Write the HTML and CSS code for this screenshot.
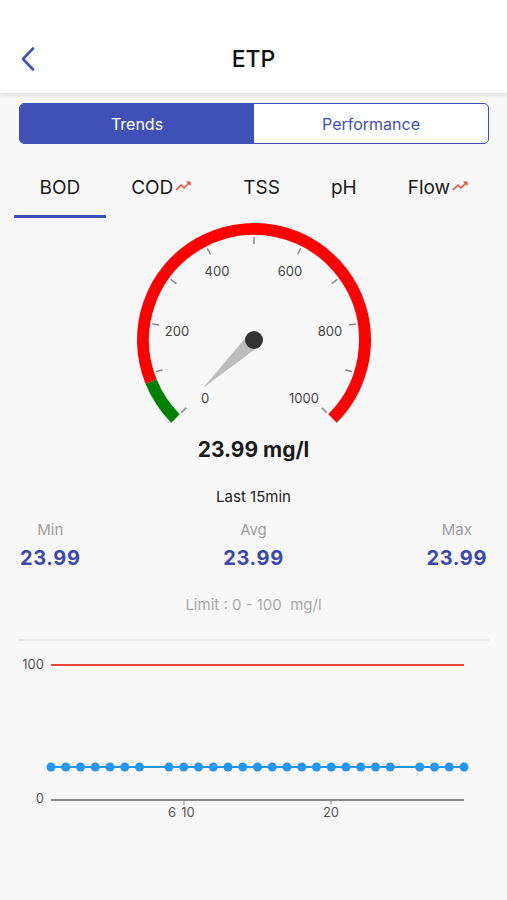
FILE: index.html
```html
<!DOCTYPE html>
<html lang="en">
<head>
    <meta charset="UTF-8">
    <meta name="viewport" content="width=device-width, initial-scale=1.0">
    <title>ETP</title>
    <link rel="stylesheet" href="styles.css">
</head>
<body>
    <div class="header">
        <div class="back-btn">
            <svg width="14" height="24" viewBox="0 0 14 24">
                <path d="M12 1.5 L2 12 L12 22.5" fill="none" stroke="#3f51b5" stroke-width="2.6" stroke-linecap="round" stroke-linejoin="round"/>
            </svg>
        </div>
        <h1 class="title">ETP</h1>
        <div></div>
    </div>

    <div class="segment">
        <div class="segment-item active">Trends</div>
        <div class="segment-item">Performance</div>
    </div>

    <div class="tabs">
        <div class="tab active">BOD</div>
        <div class="tab">COD<svg class="trend-icon" viewBox="0 0 24 24"><path d="M16 6l2.29 2.29-4.88 4.88-4-4L2 16.590 3.41 18l6-6 4 4 6.3-6.29L22 12V6z"/></svg></div>
        <div class="tab">TSS</div>
        <div class="tab">pH</div>
        <div class="tab">Flow<svg class="trend-icon" viewBox="0 0 24 24"><path d="M16 6l2.29 2.29-4.88 4.88-4-4L2 16.59 3.41 18l6-6 4 4 6.3-6.29L22 12V6z"/></svg></div>
    </div>

    <div class="gauge">
        <svg width="260" height="210" viewBox="0 0 260 210">
            <!-- arc: 135deg to 45deg clockwise, r 111 -->
            <path d="M51.51 198.49 A111 111 0 0 1 27.08 161.58" fill="none" stroke="#008000" stroke-width="12"/>
            <path d="M27.08 161.58 A111 111 0 1 1 208.49 198.49" fill="none" stroke="#ff0000" stroke-width="12"/>
            <g id="ticks" stroke="#8a8a8a" stroke-width="1.5"></g>
            <g class="gauge-labels">
                <text x="81" y="179">0</text>
                <text x="53" y="112">200</text>
                <text x="93" y="52">400</text>
                <text x="166" y="52">600</text>
                <text x="206" y="112">800</text>
                <text x="180" y="179">1000</text>
            </g>
            <polygon points="79,168 135.5,125.8 124.5,114.2" fill="#bdbdbd"/>
            <circle cx="130" cy="120" r="9" fill="#333"/>
        </svg>
    </div>
    <div class="gauge-value">23.99 mg/l</div>

    <div class="period">Last 15min</div>

    <div class="stats">
        <div class="stat">
            <div class="stat-label">Min</div>
            <div class="stat-value">23.99</div>
        </div>
        <div class="stat">
            <div class="stat-label">Avg</div>
            <div class="stat-value">23.99</div>
        </div>
        <div class="stat">
            <div class="stat-label">Max</div>
            <div class="stat-value">23.99</div>
        </div>
    </div>

    <div class="limit">Limit : 0 - 100 &nbsp;mg/l</div>
    <div class="divider"></div>

    <div class="chart">
        <svg width="507" height="190" viewBox="0 0 507 190">
            <g class="axis-labels">
                <text x="44" y="23" text-anchor="end">100</text>
                <text x="44" y="157" text-anchor="end">0</text>
                <text x="172" y="171" text-anchor="middle">6</text>
                <text x="188" y="171" text-anchor="middle">10</text>
                <text x="331" y="171" text-anchor="middle">20</text>
            </g>
            <line x1="51" y1="23" x2="464" y2="23" stroke="#f44336" stroke-width="2"/>
            <line x1="51" y1="158" x2="464" y2="158" stroke="#8a8a8a" stroke-width="2"/>
            <line x1="184" y1="158" x2="184" y2="163" stroke="#8a8a8a" stroke-width="1"/>
            <line x1="331" y1="158" x2="331" y2="163" stroke="#8a8a8a" stroke-width="1"/>
            <line x1="51" y1="125" x2="464" y2="125" stroke="#2196f3" stroke-width="2"/>
            <g id="dots" fill="#2196f3"></g>
        </svg>
    </div>

    <script>
        // gauge ticks every 100 units
        const ticks = document.getElementById('ticks');
        for (let i = 0; i <= 10; i++) {
            const a = (135 + i * 27) * Math.PI / 180;
            const line = document.createElementNS('http://www.w3.org/2000/svg', 'line');
            line.setAttribute('x1', 130 + 96 * Math.cos(a));
            line.setAttribute('y1', 120 + 96 * Math.sin(a));
            line.setAttribute('x2', 130 + 103 * Math.cos(a));
            line.setAttribute('y2', 120 + 103 * Math.sin(a));
            ticks.appendChild(line);
        }

        // chart points, two readings missing
        const dots = document.getElementById('dots');
        for (let i = 0; i <= 28; i++) {
            if (i === 7 || i === 24) continue;
            const c = document.createElementNS('http://www.w3.org/2000/svg', 'circle');
            c.setAttribute('cx', 51 + i * 14.75);
            c.setAttribute('cy', 125);
            c.setAttribute('r', 4.5);
            dots.appendChild(c);
        }
    </script>
</body>
</html>
```

FILE: styles.css
```css
body {
    margin: 0;
    background-color: #f8f8f8;
    font-family: Inter, 'Noto Sans', sans-serif;
    color: #1a1a1a;
}
.header {
    height: 93px;
    padding-top: 25px;
    box-sizing: border-box;
    background: white;
    box-shadow: 0 2px 4px rgba(0,0,0,0.12);
    display: grid;
    grid-template-columns: 60px 1fr 60px;
    align-items: center;
}
.back-btn {
    padding-left: 21px;
    display: flex;
    align-items: center;
}
.title {
    margin: 0;
    text-align: center;
    font-size: 23px;
    font-weight: 500;
    color: #111;
}
.segment {
    margin: 10px 18px 0 19px;
    height: 41px;
    display: flex;
    border: 1.5px solid #3f51b5;
    border-radius: 5px;
    overflow: hidden;
    background: white;
    box-sizing: border-box;
}
.segment-item {
    flex: 1;
    display: flex;
    align-items: center;
    justify-content: center;
    font-size: 16px;
    color: #3f51b5;
}
.segment-item.active {
    background-color: #3f51b5;
    color: white;
}
.tabs {
    display: flex;
    padding-left: 14px;
    margin-top: 17px;
}
.tab {
    display: flex;
    align-items: center;
    height: 57px;
    padding: 0 25.5px 2px;
    font-size: 19px;
    color: #1a1a1a;
    box-sizing: border-box;
    border-bottom: 3px solid transparent;
}
.tab.active {
    border-bottom-color: #3f51b5;
}
.trend-icon {
    width: 18px;
    height: 18px;
    fill: #f44336;
    margin-left: 1px;
    margin-top: -3px;
}
.gauge {
    display: flex;
    justify-content: center;
    margin-top: 2px;
    height: 210px;
}
.gauge-labels text {
    font-size: 13px;
    fill: #444;
    text-anchor: middle;
    dominant-baseline: middle;
}
.gauge-value {
    margin-top: 8px;
    text-align: center;
    font-size: 21px;
    line-height: 24px;
    font-weight: 700;
    color: #1a1a1a;
}
.period {
    margin-top: 25px;
    text-align: center;
    font-size: 15px;
    line-height: 20px;
    color: #222;
}
.stats {
    display: flex;
    justify-content: space-between;
    padding: 0 20px;
    margin-top: 13px;
}
.stat {
    text-align: center;
}
.stat-label {
    font-size: 15px;
    line-height: 20px;
    color: #9e9e9e;
}
.stat-value {
    margin-top: 6px;
    font-size: 20px;
    line-height: 24px;
    font-weight: 700;
    letter-spacing: 0.6px;
    color: #3949ab;
}
.limit {
    margin-top: 25px;
    text-align: center;
    font-size: 15px;
    line-height: 20px;
    color: #aaa;
}
.divider {
    margin: 24px 18px 0 19px;
    height: 2px;
    background-color: #e6e6e6;
}
.chart {
    display: block;
    margin-top: 1px;
}
.axis-labels text {
    font-size: 13px;
    fill: #555;
    dominant-baseline: middle;
}
```
